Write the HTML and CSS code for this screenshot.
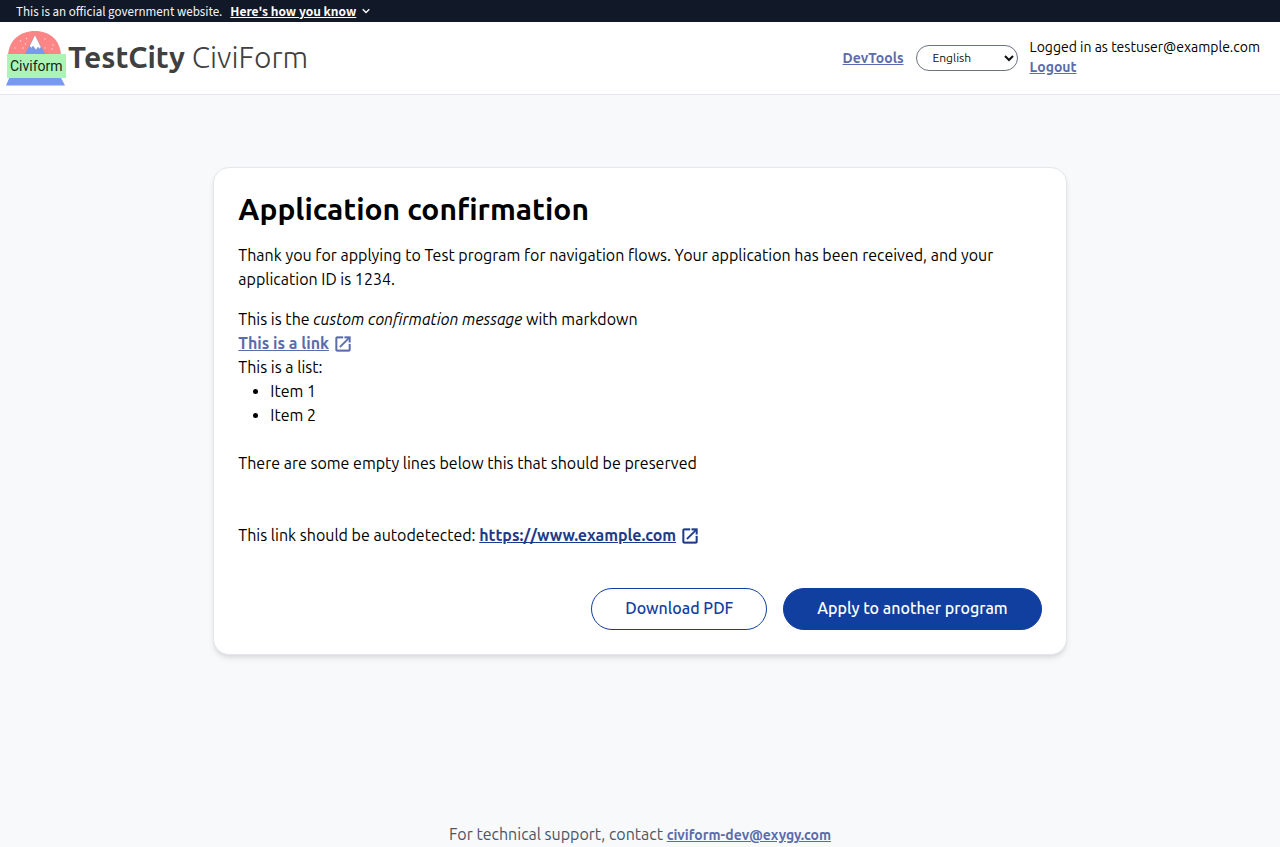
FILE: index.html
```html
<!DOCTYPE html>
<html lang="en">
<head>
<meta charset="utf-8">
<meta name="viewport" content="width=device-width, initial-scale=1">
<title>Application confirmation</title>
<link rel="stylesheet" href="styles.css">
</head>
<body>
<div class="banner">
  <span>This is an official government website.</span>
  <button class="banner-button" type="button"><span class="banner-link">Here's how you know</span><svg class="chevron" viewBox="0 0 8 6" aria-hidden="true"><path d="M.7 1.200 4 4.500 7.300 1.200" fill="none" stroke="currentColor" stroke-width="1.300"/></svg></button>
</div>
<header class="header">
  <a class="brand" href="#">
    <svg class="logo" viewBox="0 0 60 56" role="img" aria-label="Civiform logo">
      <path d="M2 25C3 10 14 1 29 1S54 10 55 25Z" fill="#fc8585"/>
      <path d="M18 25 29 6 40 25Z" fill="#7799f0"/>
      <path d="M29 5 35 17 33.500 19 32 17 30 20 27 16 25.500 18 23.500 16Z" fill="#fff" stroke="#8a8f9f" stroke-width=".4"/>
      <g fill="#ffd9d9"><circle cx="14.500" cy="11" r=".8"/><circle cx="20.500" cy="8.500" r=".7"/><circle cx="19.500" cy="14" r=".7"/><circle cx="9" cy="18" r=".7"/><circle cx="17" cy="18" r=".8"/><circle cx="39" cy="9" r=".7"/><circle cx="47" cy="15" r=".8"/><circle cx="39" cy="18" r=".7"/><circle cx="46" cy="19" r=".8"/></g>
      <path d="M4 46H54L59 55.500H0Z" fill="#7799f0"/>
      <rect x="1" y="24" width="59" height="24" fill="#abf4b6"/>
      <text x="4" y="41" class="logo-text">Civiform</text>
    </svg>
    <span class="brand-name"><b>TestCity</b> <span class="brand-light">CiviForm</span></span>
  </a>
  <nav class="tools">
    <a class="link" href="#">DevTools</a>
    <select class="language" aria-label="Language"><option>English</option></select>
    <div class="account"><span>Logged in as testuser@example.com</span><a class="link" href="#">Logout</a></div>
  </nav>
</header>
<main class="main">
  <section class="card">
    <h1 class="title">Application confirmation</h1>
    <p class="intro">Thank you for applying to Test program for navigation flows. Your application has been received, and your application ID is 1234.</p>
    <div class="message">
      <p>This is the <em>custom confirmation message</em> with markdown</p>
      <p><a class="link" href="#">This is a link<svg class="external" viewBox="0 0 24 24" aria-hidden="true"><path fill="currentColor" stroke="currentColor" stroke-width=".4" d="M19 19H5V5h7V3H5c-1.110 0-2 .9-2 2v14c0 1.100.89 2 2 2h14c1.100 0 2-.9 2-2v-7h-2v7zM14 3v2h3.590l-9.830 9.830 1.410 1.410L19 6.410V10h2V3h-7z"/></svg></a></p>
      <p>This is a list:</p>
      <ul class="list"><li>Item 1</li><li>Item 2</li></ul>
      <p class="preserved">There are some empty lines below this that should be preserved</p>
      <p>This link should be autodetected: <a class="link link-strong" href="#">https://www.example.com<svg class="external" viewBox="0 0 24 24" aria-hidden="true"><path fill="currentColor" stroke="currentColor" stroke-width=".4" d="M19 19H5V5h7V3H5c-1.110 0-2 .9-2 2v14c0 1.100.89 2 2 2h14c1.100 0 2-.9 2-2v-7h-2v7zM14 3v2h3.590l-9.830 9.830 1.410 1.410L19 6.410V10h2V3h-7z"/></svg></a></p>
    </div>
    <div class="actions">
      <button class="button" type="button">Download PDF</button>
      <button class="button button-primary" type="button">Apply to another program</button>
    </div>
  </section>
</main>
<footer class="footer">For technical support, contact <a class="link footer-link" href="#">civiform-dev@exygy.com</a></footer>
</body>
</html>
```
FILE: styles.css
```css
* { box-sizing: border-box; }
body {
  margin: 0;
  min-height: 100vh;
  display: flex;
  flex-direction: column;
  background: #f8f9fb;
  color: #000;
  font: 16px/24px Ubuntu, "Noto Sans", sans-serif;
}
p, h1, ul { margin: 0; }
button, select { font: inherit; }
.banner {
  display: flex;
  align-items: baseline;
  gap: 8px;
  padding: 1px 16px 0;
  background: #111827;
  color: #f3f4f6;
  font: 13px/20px "Source Sans 3", "Noto Sans CJK SC", sans-serif;
}
.banner-button {
  display: flex;
  align-items: center;
  gap: 6px;
  padding: 0;
  border: 0;
  background: none;
  color: #fff;
  font: 700 12px/20px "Noto Sans CJK SC", sans-serif;
}
.banner-link { text-decoration: underline; }
.chevron { width: 8px; height: 6px; }
.header {
  display: flex;
  align-items: center;
  justify-content: space-between;
  min-height: 73px;
  padding: 0 20px 0 6px;
  background: #fff;
  border-bottom: 1px solid #e5e7eb;
}
.brand {
  display: flex;
  align-items: center;
  gap: 2px;
  color: #404040;
  text-decoration: none;
}
.logo { width: 60px; height: 56px; }
.logo-text { font: 14px Roboto, sans-serif; fill: #17251a; }
.brand-name { padding-bottom: 2px; font-size: 30px; line-height: 36px; }
.brand-light { font-weight: 300; }
.tools {
  display: flex;
  align-items: center;
  gap: 12px;
  font-size: 14px;
  line-height: 20px;
}
.account { display: flex; flex-direction: column; align-items: flex-start; padding-bottom: 2px; }
.language {
  width: 102px;
  height: 26px;
  padding: 0 0 2px 12px;
  border: 1px solid #6b7280;
  border-radius: 13px;
  background: #fff;
  color: #111;
  font-size: 12px;
}
.link { color: #5a6cab; font-weight: 600; text-decoration: underline; }
.link-strong { color: #1e3a8a; }
.main { padding: 72px 16px; }
.card {
  width: 66.6667vw;
  margin: 0 auto;
  padding: 23px 24px 24px;
  background: #fff;
  border: 1px solid #e5e7eb;
  border-radius: 16px;
  box-shadow: 0 4px 6px -1px rgba(0, 0, 0, .1), 0 2px 4px -1px rgba(0, 0, 0, .06);
}
.title { margin-bottom: 16px; font-size: 30px; line-height: 36px; font-weight: 600; }
.intro { margin-bottom: 16px; }
.list { margin-bottom: 24px; padding-left: 32px; }
.preserved { margin-bottom: 48px; }
.external { width: 20px; height: 20px; margin-left: 4px; vertical-align: -5px; }
.actions { display: flex; justify-content: flex-end; gap: 16px; margin-top: 41px; }
.button {
  padding: 7px 33px 9px;
  border: 1px solid #113f9f;
  border-radius: 21px;
  background: #fff;
  color: #113f9f;
  font-weight: 500;
}
.button-primary { background: #113f9f; color: #fff; }
.footer { margin-top: auto; text-align: center; color: #4b5563; }
.footer-link { font-size: 14px; }
```
